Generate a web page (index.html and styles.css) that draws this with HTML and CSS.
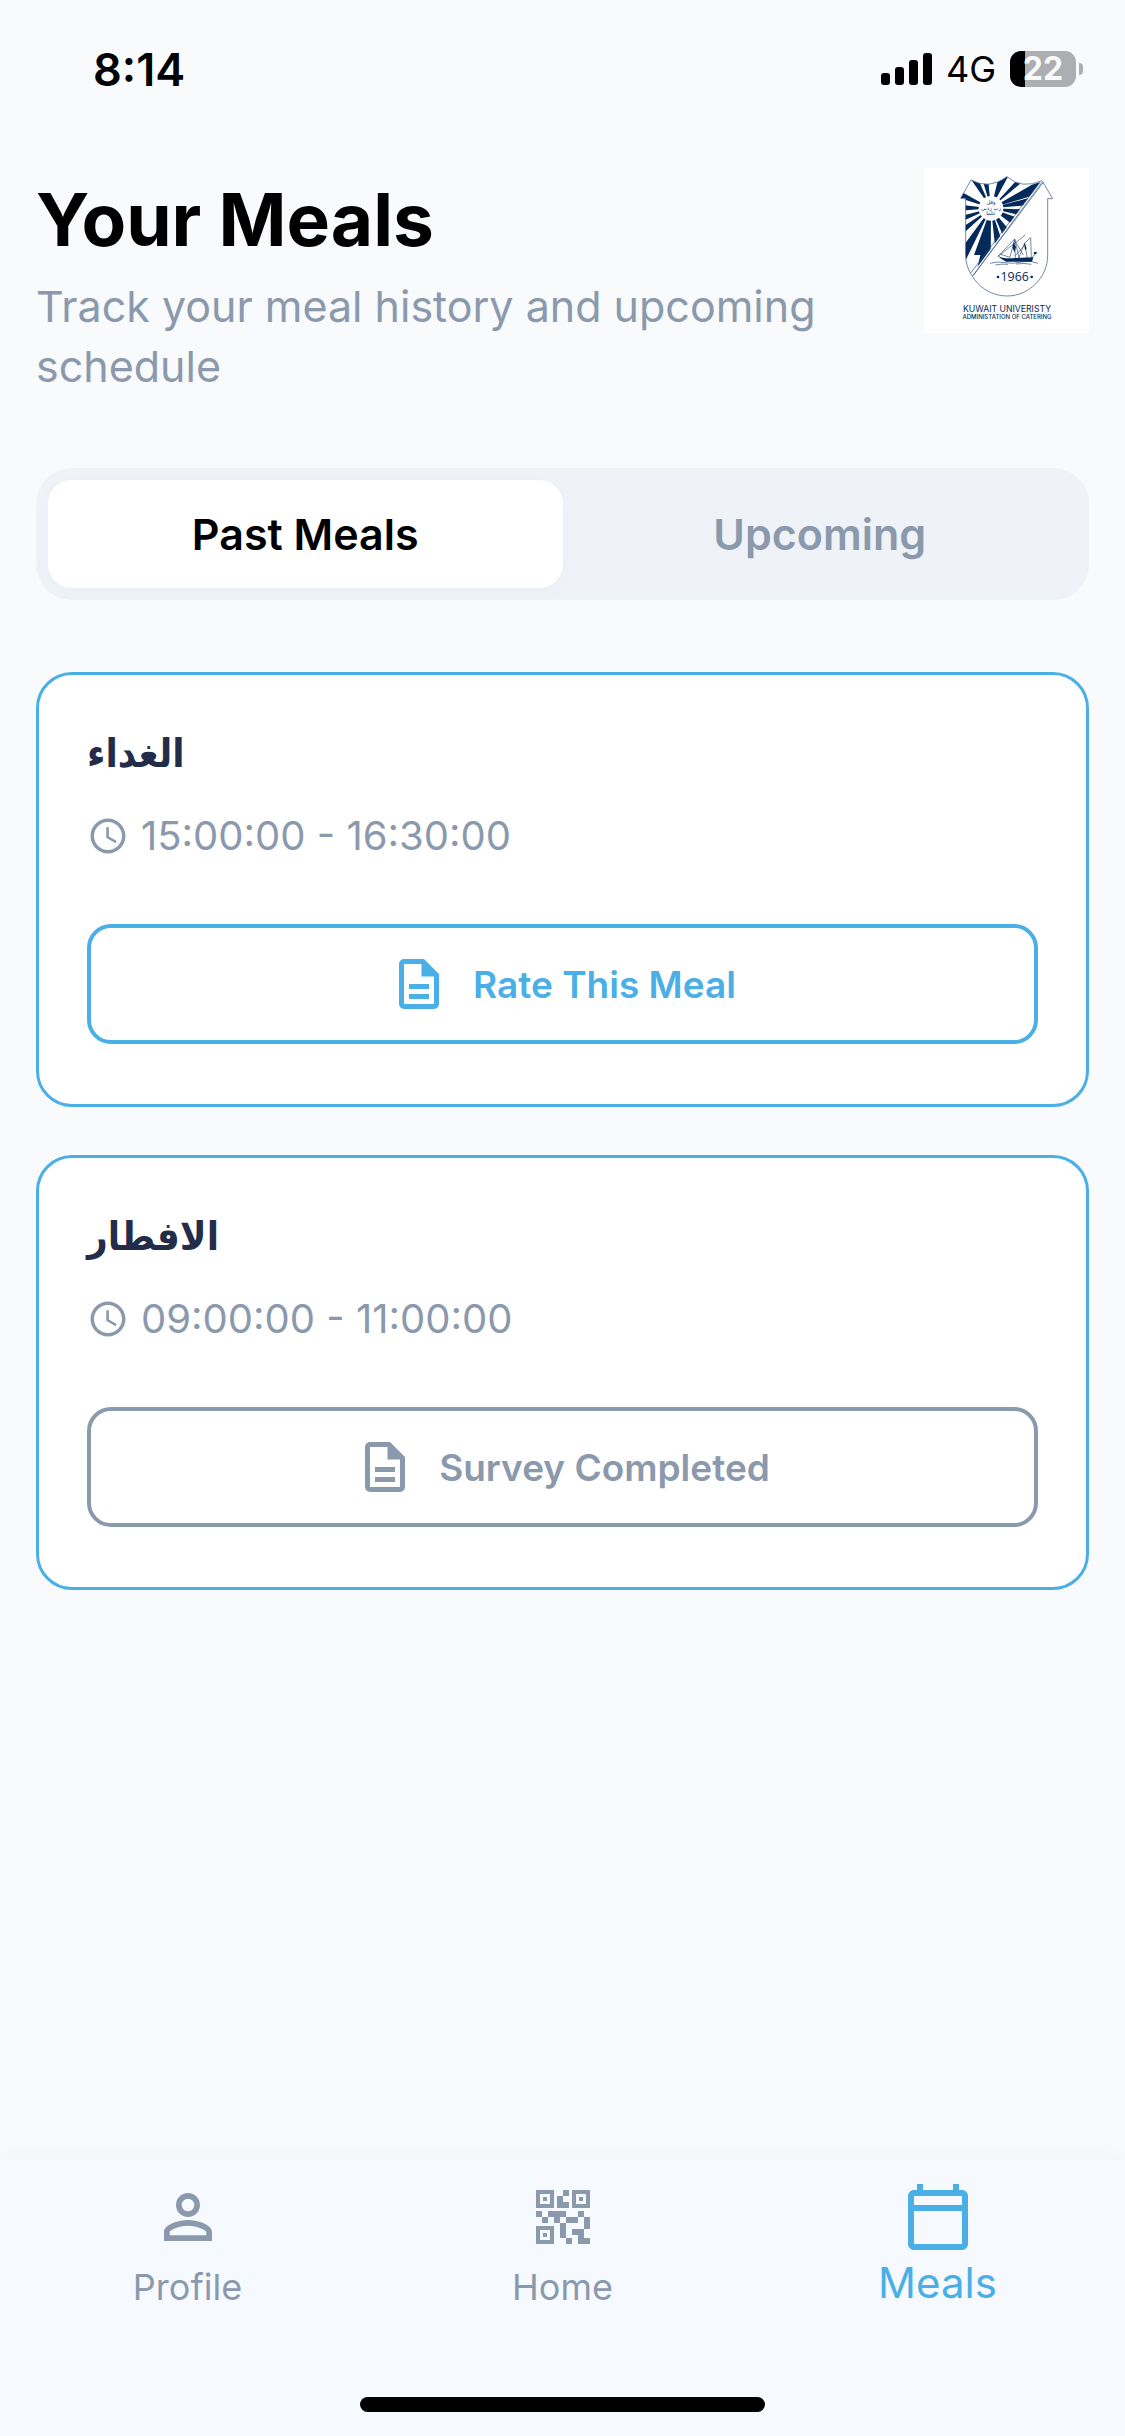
FILE: index.html
```html
<!DOCTYPE html>
<html lang="en">
<head>
    <meta charset="UTF-8">
    <meta name="viewport" content="width=device-width, initial-scale=1.0">
    <title>Your Meals</title>
    <link rel="stylesheet" href="styles.css">
</head>
<body>
    <div class="status-bar">
        <span class="status-time">8:14</span>
        <div class="status-icons">
            <svg class="signal" viewBox="0 0 51 32" aria-hidden="true">
                <rect x="0" y="20" width="9" height="12" rx="3"/>
                <rect x="14" y="14" width="9" height="18" rx="3"/>
                <rect x="28" y="7" width="9" height="25" rx="3"/>
                <rect x="42" y="0" width="9" height="32" rx="3"/>
            </svg>
            <span class="network">4G</span>
            <div class="battery">
                <span class="battery-body">22</span>
                <span class="battery-cap"></span>
            </div>
        </div>
    </div>

    <header class="header">
        <div class="header-text">
            <h1>Your Meals</h1>
            <p class="subtitle">Track your meal history and upcoming schedule</p>
        </div>
        <svg class="logo" viewBox="42 39 495 495" role="img" aria-label="Kuwait University">
            <defs>
                <clipPath id="rays">
                    <path d="M183 75Q238 105 291 65Q335 104 390 82L186 358Q167 335 167 300V130H152Z"/>
                </clipPath>
            </defs>
            <g clip-path="url(#rays)" class="logo-fill">
                <path d="M243 160L160 40L190 40ZM243 160L210 50L232 50ZM243 160L270 50L302 50ZM243 160L325 70L350 70ZM243 160L390 75L400 112ZM243 160L380 122L380 148ZM243 160L370 164L370 190ZM243 160L350 198L330 226ZM243 160L310 240L288 262ZM243 160L283 280L258 300ZM243 160L242 350L195 370ZM243 160L212 300L192 300ZM243 160L160 330L140 300ZM243 160L140 254L140 228ZM243 160L140 206L140 186ZM243 160L140 168L140 148ZM243 160L140 126L140 102Z"/>
                <circle cx="243" cy="160" r="37" class="logo-paper"/>
            </g>
            <g class="logo-motto">
                <text x="243" y="147">وقل</text>
                <text x="243" y="164">رب زدني</text>
                <text x="243" y="181">علما</text>
            </g>
            <g class="logo-line">
                <path d="M167 130H152L183 75Q238 105 291 65Q335 104 396 77L428 131H413V302C413 366 358 423 291 423C244 423 205 396 186 362Q167 335 167 300Z"/>
                <path d="M390 82L182 354M396 82L188 363M400 82L190 361"/>
                <path d="M264 304L314 252L328 312M264 304L346 240M272 298L300 307L314 252L316 310M326 310L344 264L352 310M344 264L362 248L364 306M314 256L340 300M346 268L316 302M366 308L380 292"/>
                <path d="M240 325Q262 318 285 323T334 321T384 325M256 330Q276 326 294 328M318 327Q342 323 364 328"/>
            </g>
            <path class="logo-fill" d="M262 302Q278 312 316 309L370 307L366 320H288Q274 312 262 302ZM310 262L318 276L313 292L308 278ZM342 262L350 280L345 286ZM371 292L380 290L379 297L372 298Z"/>
            <circle class="logo-fill" cx="264" cy="366" r="4"/>
            <circle class="logo-fill" cx="365" cy="366" r="4"/>
            <text class="logo-year" x="314" y="379">1966</text>
            <text class="logo-name" x="291" y="471">KUWAIT UNIVERISTY</text>
            <text class="logo-dept" x="291" y="493">ADMINISTATION OF CATERING</text>
        </svg>
    </header>

    <main>
        <div class="tabs" role="tablist">
            <button type="button" class="tab active" role="tab" aria-selected="true">Past Meals</button>
            <button type="button" class="tab" role="tab" aria-selected="false">Upcoming</button>
        </div>

        <section class="card">
            <h2 lang="ar">الغداء</h2>
            <p class="time">
                <svg viewBox="0 0 24 24" aria-hidden="true"><path d="M11.99 2C6.47 2 2 6.48 2 12s4.47 10 9.99 10C17.52 22 22 17.52 22 12S17.52 2 11.99 2zM12 20c-4.42 0-8-3.58-8-8s3.58-8 8-8 8 3.58 8 8-3.58 8-8 8zm.5-13H11v6l5.25 3.15.75-1.23-4.5-2.67z"/></svg>
                15:00:00 - 16:30:00
            </p>
            <button type="button" class="button-survey">
                <svg viewBox="0 0 24 24" aria-hidden="true"><path d="M6 2a2 2 0 0 0-2 2v16a2 2 0 0 0 2 2h12a2 2 0 0 0 2-2V8l-6-6H6zm0 2h7v5h5v11H6V4zm2 8v2h8v-2H8zm0 4v2h8v-2H8z"/></svg>
                Rate This Meal
            </button>
        </section>

        <section class="card">
            <h2 lang="ar">الافطار</h2>
            <p class="time">
                <svg viewBox="0 0 24 24" aria-hidden="true"><path d="M11.99 2C6.47 2 2 6.48 2 12s4.47 10 9.99 10C17.52 22 22 17.52 22 12S17.52 2 11.99 2zM12 20c-4.42 0-8-3.58-8-8s3.58-8 8-8 8 3.58 8 8-3.58 8-8 8zm.5-13H11v6l5.25 3.15.75-1.23-4.5-2.67z"/></svg>
                09:00:00 - 11:00:00
            </p>
            <button type="button" class="button-survey completed">
                <svg viewBox="0 0 24 24" aria-hidden="true"><path d="M6 2a2 2 0 0 0-2 2v16a2 2 0 0 0 2 2h12a2 2 0 0 0 2-2V8l-6-6H6zm0 2h7v5h5v11H6V4zm2 8v2h8v-2H8zm0 4v2h8v-2H8z"/></svg>
                Survey Completed
            </button>
        </section>
    </main>

    <footer class="bottom-bar">
        <nav class="nav">
            <a href="#profile" class="nav-item">
                <svg viewBox="0 0 24 24" aria-hidden="true"><path d="M12 5.9a2.1 2.1 0 1 1 0 4.2 2.1 2.1 0 0 1 0-4.2m0 9c2.97 0 6.1 1.46 6.1 2.1v1.1H5.9V17c0-.64 3.13-2.1 6.1-2.1M12 4C9.79 4 8 5.79 8 8s1.79 4 4 4 4-1.79 4-4-1.79-4-4-4zm0 9c-2.67 0-8 1.34-8 4v3h16v-3c0-2.66-5.33-4-8-4z"/></svg>
                Profile
            </a>
            <a href="#home" class="nav-item">
                <svg viewBox="-9 -9 72 72" aria-hidden="true">
                    <path fill-rule="evenodd" d="M0 0h18v18H0zM4 4v10h10V4zM36 0h18v18H36zM40 4v10h10V4zM0 36h18v18H0zM4 40v10h10V40z"/>
                    <path d="M7 7h4v4H7zM43 7h4v4h-4zM7 43h4v4H7zM27 0h6v6h-6v6h6v6H21V6h6zM0 21h6v6H0zM6 27h6v6H6zM12 21h18v6h-6v6h-6v-6h-6zM42 21h6v6h-6zM30 27h12v6H30zM48 27h6v12h-6zM24 33h6v15h-6zM30 48h6v6h-6zM36 39h12v9h6v6H42v-9h-6z"/>
                </svg>
                Home
            </a>
            <a href="#meals" class="nav-item active" aria-current="page">
                <svg viewBox="0 0 24 24" aria-hidden="true"><path d="M20 3h-1V1h-2v2H7V1H5v2H4c-1.1 0-2 .9-2 2v16c0 1.1.9 2 2 2h16c1.1 0 2-.9 2-2V5c0-1.1-.9-2-2-2zm0 18H4V10h16v11zm0-13H4V5h16v3z"/></svg>
                Meals
            </a>
        </nav>
        <div class="home-indicator"></div>
    </footer>
</body>
</html>
```

FILE: styles.css
```css
* {
    margin: 0;
    padding: 0;
    box-sizing: border-box;
}

body {
    font-family: Inter, 'Liberation Sans', 'DejaVu Sans', sans-serif;
    background: #f8fafc;
    color: #000;
    min-height: 100vh;
    display: flex;
    flex-direction: column;
}

button {
    font-family: inherit;
    border: none;
    background: none;
    cursor: pointer;
}

svg {
    fill: currentColor;
    flex-shrink: 0;
}

/* Status bar */
.status-bar {
    display: flex;
    align-items: center;
    justify-content: space-between;
    height: 138px;
    padding: 0 42px 0 93px;
}

.status-time {
    font-size: 45px;
    font-weight: 600;
}

.status-icons {
    display: flex;
    align-items: center;
    gap: 14px;
}

.signal {
    width: 51px;
    height: 32px;
}

.network {
    font-size: 36px;
}

.battery {
    display: flex;
    align-items: center;
    gap: 3px;
}

.battery-body {
    width: 66px;
    height: 36px;
    border-radius: 11px;
    background: linear-gradient(to right, #000 15px, #adaeb0 15px);
    color: #f8fafc;
    font-size: 32px;
    font-weight: 700;
    line-height: 36px;
    text-align: center;
}

.battery-cap {
    width: 4px;
    height: 12px;
    border-radius: 0 6px 6px 0;
    background: #adaeb0;
}

/* Header */
.header {
    display: flex;
    align-items: flex-start;
    justify-content: space-between;
    gap: 48px;
    padding: 30px 36px 0;
}

.header-text {
    flex: 1;
    padding-top: 8px;
}

h1 {
    font-size: 73px;
    line-height: 88px;
    font-weight: 700;
    margin-bottom: 12px;
}

.subtitle {
    font-size: 43px;
    line-height: 60px;
    color: #8b99ad;
}

.logo {
    width: 165px;
    height: 165px;
    background: #fff;
    color: #042a5b;
}

.logo-fill {
    fill: #042a5b;
}

.logo-paper {
    fill: #fff;
}

.logo-line {
    fill: none;
    stroke: #2f4f78;
    stroke-width: 2;
}

.logo text {
    text-anchor: middle;
}

.logo-motto {
    font-family: 'DejaVu Sans', sans-serif;
    font-size: 16px;
}

.logo-year {
    font-family: 'Open Sans', sans-serif;
    font-size: 37px;
}

.logo-name {
    font-size: 26px;
}

.logo-dept {
    font-size: 18px;
    font-weight: 500;
}

/* Content */
main {
    display: flex;
    flex-direction: column;
    gap: 48px;
    padding: 72px 36px 48px;
}

.tabs {
    display: flex;
    padding: 12px;
    margin-bottom: 24px;
    border-radius: 36px;
    background: #eff2f7;
}

.tab {
    flex: 1;
    height: 108px;
    border-radius: 24px;
    font-size: 43px;
    font-weight: 600;
    color: #8b99ad;
}

.tab.active {
    background: #fff;
    color: #000;
    box-shadow: 0 6px 24px rgba(0, 0, 0, 0.02);
}

.card {
    display: flex;
    flex-direction: column;
    padding: 48px 48px 60px;
    border: 3px solid #4aafe6;
    border-radius: 36px;
    background: #fff;
}

.card h2 {
    font-family: 'DejaVu Sans Condensed', 'DejaVu Sans', sans-serif;
    font-size: 40px;
    line-height: 60px;
    font-weight: 700;
    color: #232c49;
    margin-bottom: 24px;
}

.time {
    display: flex;
    align-items: center;
    gap: 12px;
    font-size: 40px;
    line-height: 58px;
    color: #8b99ad;
    margin-bottom: 59px;
}

.time svg {
    width: 42px;
    height: 42px;
}

.button-survey {
    display: flex;
    align-items: center;
    justify-content: center;
    gap: 24px;
    height: 120px;
    border: 4px solid currentColor;
    border-radius: 24px;
    font-size: 37px;
    font-weight: 600;
    color: #4aafe6;
}

.button-survey svg {
    width: 60px;
    height: 60px;
}

.button-survey.completed {
    color: #8b99ad;
}

/* Bottom navigation */
.bottom-bar {
    display: flex;
    flex-direction: column;
    justify-content: space-between;
    align-items: center;
    min-height: 276px;
    margin-top: auto;
    padding: 21px 0 24px;
    background: #f6f9fe;
    box-shadow: 0 -6px 30px rgba(0, 0, 0, 0.03);
}

.nav {
    display: flex;
    width: 100%;
}

.nav-item {
    flex: 1;
    display: flex;
    flex-direction: column;
    align-items: center;
    gap: 12px;
    font-size: 36px;
    line-height: 44px;
    color: #8b99ad;
    text-decoration: none;
}

.nav-item svg {
    width: 72px;
    height: 72px;
}

.nav-item.active {
    gap: 5px;
    font-size: 42px;
    line-height: 50px;
    color: #4aafe6;
}

.home-indicator {
    width: 36%;
    height: 15px;
    border-radius: 8px;
    background: #000;
}
```
